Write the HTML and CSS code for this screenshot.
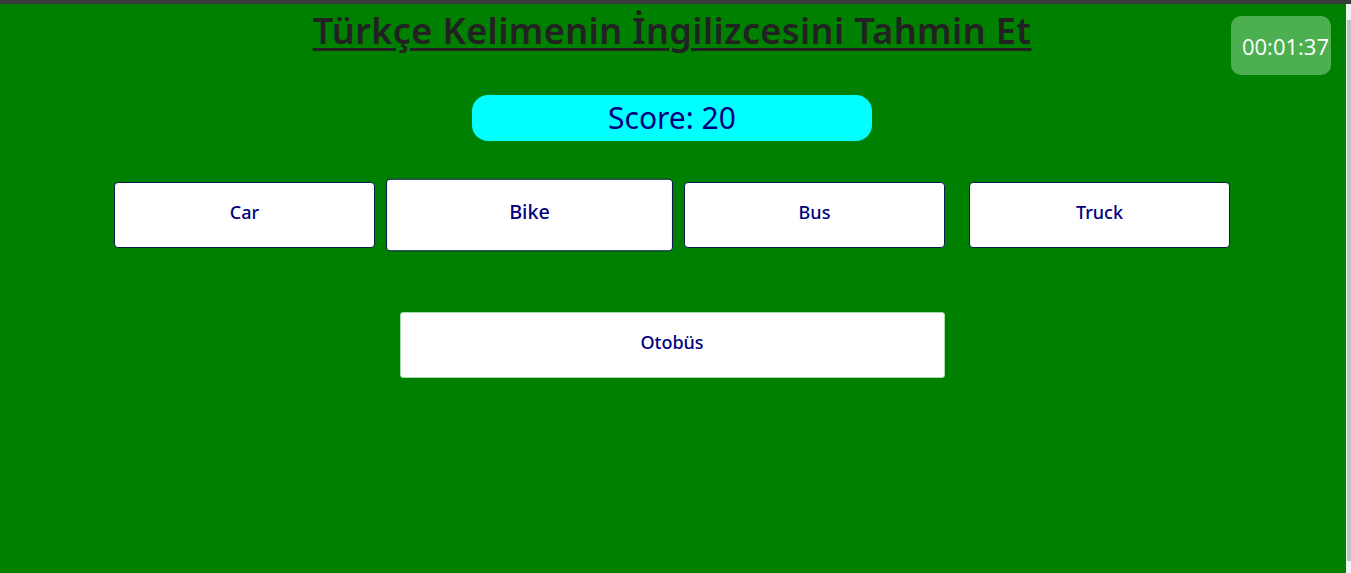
FILE: index.html
```html
<!DOCTYPE html>
<html lang="tr">
<head>
<meta charset="utf-8">
<title>Kelime Oyunu</title>
<link rel="stylesheet" href="styles.css">
</head>
<body>
<div class="app">
  <div class="topbar"></div>
  <div class="row">
    <main class="main">
      <h1 class="title"><a href="#">Türkçe Kelimenin İngilizcesini Tahmin Et</a></h1>
      <div class="timer">00:01:37</div>
      <div class="score">Score: 20</div>
      <div class="options">
        <button class="option">Car</button>
        <button class="option option-hover">Bike</button>
        <button class="option">Bus</button>
        <button class="option">Truck</button>
      </div>
      <div class="word">Otobüs</div>
    </main>
    <div class="scrollbar"><div class="thumb"></div></div>
  </div>
</div>
</body>
</html>
```

FILE: styles.css
```css
html, body {
  margin: 0;
  padding: 0;
  height: 100%;
  overflow: hidden;
}
body {
  font-family: "Noto Sans", "Open Sans", sans-serif;
}
.app {
  display: flex;
  flex-direction: column;
  height: 573px;
}
.topbar {
  height: 4px;
  background: #3b3b3b;
}
.row {
  display: flex;
  flex: 1;
}
.main {
  flex: 1;
  background: #008000;
  position: relative;
  display: flex;
  flex-direction: column;
  align-items: center;
  padding-right: 2px;
}
.scrollbar {
  width: 5px;
  background: #f1f1f1;
  padding: 16px 0 12px 1px;
  box-sizing: border-box;
  display: flex;
}
.thumb {
  flex: 1;
  background: #c1c1c1;
}
.title {
  margin: 3px 0 0;
  font-size: 36px;
  line-height: 48px;
  font-weight: 600;
  letter-spacing: 0.4px;
}
.title a {
  color: #222;
  text-decoration: underline;
  text-decoration-thickness: 3px;
  text-underline-offset: 4px;
}
.timer {
  position: absolute;
  top: 12px;
  right: 15px;
  width: 100px;
  height: 59px;
  box-sizing: border-box;
  background: #4caf50;
  border-radius: 10px;
  color: #fff;
  font-family: "Open Sans", sans-serif;
  font-size: 22px;
  display: flex;
  align-items: center;
  justify-content: flex-end;
  padding: 1px 2px 0 0;
}
.score {
  margin-top: 40px;
  width: 400px;
  height: 46px;
  border-radius: 16px;
  background: #00ffff;
  color: #000080;
  font-size: 30px;
  display: flex;
  align-items: center;
  justify-content: center;
  padding-bottom: 2px;
  box-sizing: border-box;
}
.options {
  margin-top: 41px;
  display: flex;
  gap: 24px;
}
.option {
  width: 261px;
  height: 66px;
  background: #fff;
  border: 1px solid #0b1c4f;
  border-radius: 4px;
  color: #000080;
  font-family: "Noto Sans", sans-serif;
  font-size: 18px;
  font-weight: 500;
  padding: 0 0 7px;
}
.option-hover {
  transform: scale(1.1);
}
.word {
  margin-top: 64px;
  width: 545px;
  height: 66px;
  box-sizing: border-box;
  background: #fff;
  border: 1px solid #a8dca8;
  border-radius: 3px;
  color: #000080;
  font-size: 18px;
  font-weight: 500;
  display: flex;
  align-items: center;
  justify-content: center;
  padding-bottom: 7px;
}
```
